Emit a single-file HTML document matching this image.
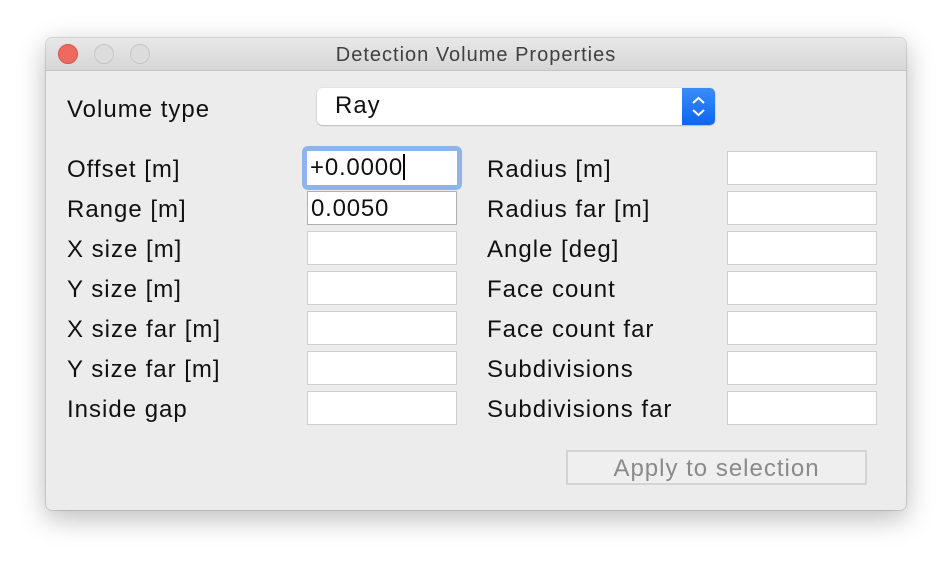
<!DOCTYPE html>
<html><head><style>
body{margin:0;width:952px;height:564px;background:#fff;position:relative;overflow:hidden;font-family:"Liberation Sans",sans-serif;}
.win{position:absolute;left:46px;top:38px;width:860px;height:472px;background:#ececec;border-radius:6px;box-shadow:0 8px 28px rgba(0,0,0,.28),0 0 0 1px rgba(0,0,0,.12);overflow:hidden}
.tb{position:absolute;left:0;top:0;width:100%;height:32px;background:linear-gradient(#e8e8e8,#d6d6d6);border-bottom:1px solid #c4c4c4;text-align:center;line-height:34px;font-size:20px;letter-spacing:1px;color:#404040}
.dot{position:absolute;top:6px;width:20px;height:20px;border-radius:50%;box-sizing:border-box}
.l{position:absolute;font-size:24px;letter-spacing:1px;color:#111;white-space:nowrap}
.f{position:absolute;width:150px;height:34px;background:#fff;border:1px solid #cfcfcf;box-sizing:border-box;font-size:24px;letter-spacing:0.8px;line-height:34px;padding-left:3px;color:#111}
</style></head><body>
<div class="win">
<div class="tb">Detection Volume Properties
<div class="dot" style="left:12px;background:#ee6a5e;border:1px solid #d5564b"></div>
<div class="dot" style="left:48px;background:#dcdcdc;border:1px solid #c6c6c6"></div>
<div class="dot" style="left:84px;background:#dcdcdc;border:1px solid #c6c6c6"></div>
</div>
<div class="l" style="left:21px;top:58px">Volume type</div>
<div style="position:absolute;left:271px;top:50px;width:398px;height:37px;background:#fff;border-radius:5px;box-shadow:0 0.5px 1.5px rgba(0,0,0,.35)">
<span style="position:absolute;left:18px;top:4px;font-size:24px;letter-spacing:1px;color:#111">Ray</span>
<div style="position:absolute;right:0;top:0;width:33px;height:37px;background:linear-gradient(#3b8dfb,#0f64f0);border-radius:0 5px 5px 0">
<svg width="33" height="37" viewBox="0 0 33 37"><path d="M11 15l5.5-5 5.5 5M11 22l5.5 5 5.5-5" stroke="#fff" stroke-width="2" fill="none"/></svg></div></div>

<div style="position:absolute;left:256px;top:108px;width:160px;height:44px;border-radius:6px;background:#8db5ec"></div>
<div class="f" style="left:261px;top:113px;border:none;height:34px;">+0.0000<span style="display:inline-block;width:2px;height:26px;background:#000;vertical-align:-5px"></span></div>
<div class="f" style="left:261px;top:153px;border-color:#b0b0b0">0.0050</div>

<div class="l" style="left:21px;top:118px">Offset [m]</div>
<div class="l" style="left:21px;top:158px">Range [m]</div>
<div class="l" style="left:21px;top:198px">X size [m]</div>
<div class="l" style="left:21px;top:238px">Y size [m]</div>
<div class="l" style="left:21px;top:278px">X size far [m]</div>
<div class="l" style="left:21px;top:318px">Y size far [m]</div>
<div class="l" style="left:21px;top:358px">Inside gap</div>
<div class="f" style="left:261px;top:193px"></div>
<div class="f" style="left:261px;top:233px"></div>
<div class="f" style="left:261px;top:273px"></div>
<div class="f" style="left:261px;top:313px"></div>
<div class="f" style="left:261px;top:353px"></div>

<div class="l" style="left:441px;top:118px">Radius [m]</div>
<div class="l" style="left:441px;top:158px">Radius far [m]</div>
<div class="l" style="left:441px;top:198px">Angle [deg]</div>
<div class="l" style="left:441px;top:238px">Face count</div>
<div class="l" style="left:441px;top:278px">Face count far</div>
<div class="l" style="left:441px;top:318px">Subdivisions</div>
<div class="l" style="left:441px;top:358px">Subdivisions far</div>
<div class="f" style="left:681px;top:113px"></div>
<div class="f" style="left:681px;top:153px"></div>
<div class="f" style="left:681px;top:193px"></div>
<div class="f" style="left:681px;top:233px"></div>
<div class="f" style="left:681px;top:273px"></div>
<div class="f" style="left:681px;top:313px"></div>
<div class="f" style="left:681px;top:353px"></div>

<div style="position:absolute;left:520px;top:412px;width:301px;height:35px;box-sizing:border-box;border:2px solid #d3d3d3;background:#efefef;text-align:center;font-size:24px;letter-spacing:1px;line-height:33px;color:#8a8a8a">Apply to selection</div>
</div>
</body></html>
